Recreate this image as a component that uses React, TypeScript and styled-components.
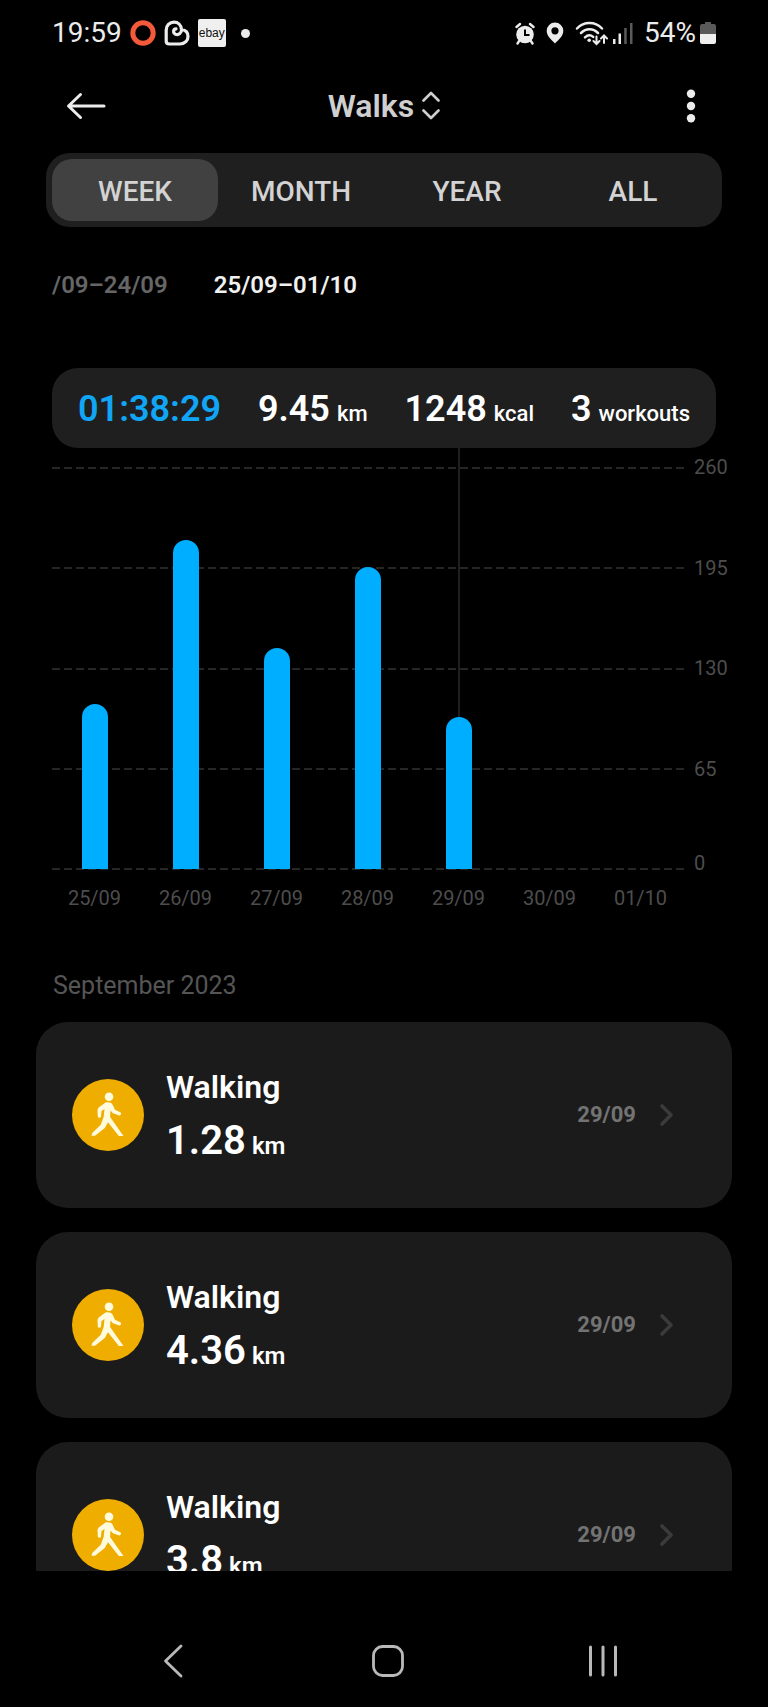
import React, { useState } from "react";
import styled, { createGlobalStyle } from "styled-components";

const GlobalStyle = createGlobalStyle`
  *, *::before, *::after { box-sizing: border-box; }
  body { margin: 0; background: #000; }
  button { border: 0; padding: 0; background: none; color: inherit; font: inherit; cursor: pointer; }
  a { color: inherit; text-decoration: none; }
  svg { display: block; flex: none; }
`;

const Screen = styled.div`
  display: flex;
  flex-direction: column;
  height: 100vh;
  overflow: hidden;
  background: #000;
  color: #fff;
  font-family: Roboto, "Liberation Sans", sans-serif;
`;

const StatusBar = styled.div`
  display: flex;
  flex: none;
  align-items: center;
  justify-content: space-between;
  height: 66px;
  padding: 0 52px;
  color: #ececec;
  font-size: 28px;
  line-height: 32px;
`;

const StatusGroup = styled.div<{ $gap: number }>`
  display: flex;
  align-items: center;
  gap: ${(p) => p.$gap}px;
`;

const EbayBadge = styled.span`
  display: flex;
  align-items: center;
  justify-content: center;
  width: 28px;
  height: 28px;
  border-radius: 2px;
  background: #efefef;
  color: #111;
  font: 12px/14px "Liberation Sans", sans-serif;
`;

const MoreDot = styled.span`
  width: 9px;
  height: 9px;
  margin-left: 7px;
  border-radius: 50%;
  background: #ececec;
`;

const Header = styled.header`
  display: grid;
  flex: none;
  grid-template-columns: 1fr auto 1fr;
  align-items: center;
  height: 80px;
  padding: 0 66px;
  color: #ececec;
`;

const EndButton = styled.button`
  justify-self: end;
  margin-right: 6px;
`;

const TitleButton = styled.button`
  display: flex;
  align-items: center;
  gap: 8px;
  color: #cfcfcf;
  font-size: 32px;
  font-weight: 600;
  line-height: 40px;
`;

const Tabs = styled.div`
  display: grid;
  flex: none;
  grid-template-columns: repeat(4, 1fr);
  height: 74px;
  margin: 7px 46px 0;
  padding: 6px;
  border-radius: 24px;
  background: #1f1f1f;
`;

const Tab = styled.button<{ $active: boolean }>`
  padding-top: 3px;
  border-radius: 20px;
  background: ${(p) => (p.$active ? "#414141" : "transparent")};
  color: #d3d3d3;
  font-size: 28px;
  font-weight: 500;
  line-height: 32px;
`;

const Ranges = styled.div`
  display: flex;
  flex: none;
  gap: 46px;
  margin: 42px 52px 0;
`;

const Range = styled.button<{ $active: boolean }>`
  color: ${(p) => (p.$active ? "#f0f0f0" : "#666")};
  font-size: 24px;
  font-weight: 600;
  line-height: 32px;
`;

const Summary = styled.section`
  display: flex;
  flex: none;
  align-items: center;
  justify-content: space-between;
  height: 80px;
  margin: 67px 52px 0;
  padding: 2px 26px 0;
  border-radius: 26px;
  background: #1f1f1f;
`;

const Stat = styled.div<{ $accent?: boolean }>`
  color: ${(p) => (p.$accent ? "#10a5f5" : "#fff")};
  font-size: 36px;
  font-weight: 600;
  line-height: 44px;
`;

const StatUnit = styled.span`
  margin-left: 7px;
  font-size: 22px;
  font-weight: 500;
  line-height: 24px;
`;

const Chart = styled.section`
  display: grid;
  flex: none;
  grid-template-columns: 1fr 74px;
  margin: 0 8px 0 49px;
  color: #4d4d4d;
  font-size: 20px;
  line-height: 24px;
`;

const Plot = styled.div`
  display: grid;
  grid-template-rows: 19px 402px;
`;

const GridLines = styled.div`
  display: flex;
  flex-direction: column;
  grid-area: 2 / 1;
  justify-content: space-between;
  margin: 0 2px -1px 3px;
`;

const GridLine = styled.div`
  height: 2px;
  background: repeating-linear-gradient(90deg, #262626 0 8px, transparent 8px 12px);
`;

const Columns = styled.div`
  display: grid;
  grid-area: 1 / 1 / 3 / 2;
  grid-template-columns: repeat(7, 1fr);
  z-index: 1;
`;

const Column = styled.div`
  display: flex;
  flex-direction: column;
  align-items: center;
`;

const Marker = styled.div<{ $visible: boolean }>`
  flex: 1;
  width: 2px;
  background: ${(p) => (p.$visible ? "#1f1f1f" : "transparent")};
`;

const Bar = styled.div`
  width: 26px;
  border-radius: 13px 13px 0 0;
  background: #00aeff;
`;

const YAxis = styled.div`
  display: flex;
  flex-direction: column;
  justify-content: space-between;
  height: 420px;
  margin-top: 7px;
  padding-left: 8px;

  /* keeps the zero above its base line */
  > :last-child { margin-top: -6px; }
`;

const XAxis = styled.div`
  display: grid;
  grid-template-columns: repeat(7, 1fr);
  margin-top: 11px;
  text-align: center;
`;

const MonthTitle = styled.h2`
  flex: none;
  margin: 60px 53px 20px;
  color: #555;
  font-size: 25px;
  font-weight: 400;
  line-height: 32px;
`;

const List = styled.main`
  display: flex;
  flex: 1;
  flex-direction: column;
  gap: 24px;
  min-height: 0;
  overflow: hidden;
  padding: 0 36px;
`;

const Card = styled.a`
  display: flex;
  flex: none;
  align-items: center;
  height: 186px;
  padding: 0 58px 0 36px;
  border-radius: 32px;
  background: #1b1b1b;
`;

const CardText = styled.div`
  flex: 1;
  margin-left: 22px;
  padding-top: 5px;
`;

const CardTitle = styled.div`
  font-size: 32px;
  font-weight: 600;
  line-height: 52px;
`;

const CardValue = styled.div`
  font-size: 40px;
  font-weight: 600;
  line-height: 56px;
`;

const CardUnit = styled.span`
  margin-left: 6px;
  font-size: 24px;
  font-weight: 600;
`;

const CardDate = styled.span`
  margin-right: 23px;
  color: #737373;
  font-size: 22px;
  font-weight: 700;
  line-height: 32px;
`;

const NavBar = styled.nav`
  display: grid;
  flex: none;
  grid-template-columns: repeat(3, 1fr);
  align-items: center;
  height: 136px;
  padding: 44px 58px 0 66px;
`;

const NavButton = styled.button`
  justify-self: center;
`;

const AlarmIcon = () => (
  <svg width="20" height="23" viewBox="0 0 20 23" fill="none" stroke="#ececec" aria-hidden="true">
    <circle cx="10" cy="12.5" r="8.8" fill="#ececec" stroke="none" />
    <path d="M1.5 5 5 2M18.500 5 15 2M4.500 18.500 2.500 21.500M15.500 18.500 17.500 21.500" strokeWidth="2.4" strokeLinecap="round" />
    <path d="M10 7.500V13h4.500" stroke="#000" strokeWidth="2" />
  </svg>
);

const PinIcon = () => (
  <svg width="18" height="22" viewBox="0 0 18 22" aria-hidden="true">
    <path fill="#ececec" fillRule="evenodd" d="M9 0.500a8.300 8.300 0 0 1 8.300 8.300C17.300 14 12.500 18 9 21.500 5.500 18 .7 14 .7 8.800A8.300 8.300 0 0 1 9 .5Zm0 4.700a3.600 3.600 0 1 0 0 7.200 3.600 3.600 0 0 0 0-7.200Z" />
  </svg>
);

const WifiIcon = () => (
  <svg width="33" height="25" viewBox="0 0 33 25" fill="none" stroke="#ececec" strokeLinecap="round" aria-hidden="true">
    <path d="M2 7.500C9 .3 20 .3 27 7.500M6 12c5-5 12-5 17 0M10 16.300c2.600-2.400 5.800-2.400 8.200-.4" strokeWidth="2.500" />
    <circle cx="14.200" cy="19.300" r="1.800" fill="#ececec" stroke="none" />
    <path d="M21.500 15.500v7.500m-3-3 3 3 3-3M29 22v-7.500m-3 3 3-3 3 3" strokeWidth="2" />
  </svg>
);

const SignalIcon = () => (
  <svg width="20" height="21" viewBox="0 0 20 21" aria-hidden="true">
    <path fill="#ececec" d="M0 16h2.500v5H0zM5.500 10.500H8V21H5.500z" />
    <path fill="#5a5a5a" d="M11.200 5h2.500v16h-2.500zM17 0h2.500v21H17z" />
  </svg>
);

const BatteryIcon = () => (
  <svg width="16" height="22" viewBox="0 0 16 22" aria-hidden="true">
    <path fill="#5a5a5a" d="M5 0h6v2h3q2 0 2 2v8H0V4q0-2 2-2h3z" />
    <path fill="#efefef" d="M0 12h16v8q0 2-2 2H2q-2 0-2-2z" />
  </svg>
);

const RingIcon = () => (
  <svg width="26" height="26" viewBox="0 0 26 26" aria-hidden="true">
    <circle cx="13" cy="13" r="10.200" fill="none" stroke="#f4593a" strokeWidth="5" />
  </svg>
);

const LoopHeartIcon = () => (
  <svg width="26" height="26" viewBox="0 0 26 26" fill="none" stroke="#ececec" strokeWidth="3.200" strokeLinecap="round" strokeLinejoin="round" aria-hidden="true">
    <path d="M12 8.800C9 9 8.800 13 11.500 14.200c3.200 1.200 6.300-1.200 6-4.700C17.200 5 14 2.200 10 2.200 5.500 2.200 2.200 5.500 2.200 10v11q0 3 3 3H16c5 0 8-3.500 8-7.600 0-4-2.500-6.400-6.500-6.900" />
  </svg>
);

const BackArrow = () => (
  <svg width="40" height="28" viewBox="0 0 40 28" fill="none" stroke="#ececec" strokeWidth="3" strokeLinecap="round" strokeLinejoin="round" aria-hidden="true">
    <path d="M38 14H3M14.500 2.500 2.500 14l12 11.500" />
  </svg>
);

const SortCarets = () => (
  <svg width="18" height="30" viewBox="0 0 18 30" fill="none" stroke="#cfcfcf" strokeWidth="2.600" strokeLinecap="round" strokeLinejoin="round" aria-hidden="true">
    <path d="m1.500 9.500 7.500-7.500 7.500 7.500M1.500 19.500 9 27l7.500-7.500" />
  </svg>
);

const KebabIcon = () => (
  <svg width="10" height="34" viewBox="0 0 10 34" fill="#ececec" aria-hidden="true">
    <circle cx="5" cy="4.700" r="4.200" />
    <circle cx="5" cy="17" r="4.200" />
    <circle cx="5" cy="29.300" r="4.200" />
  </svg>
);

const WalkerIcon = () => (
  <svg width="72" height="72" viewBox="0 0 72 72" aria-hidden="true">
    <circle cx="36" cy="36" r="36" fill="#efad00" />
    <g fill="#fffbdc">
      <circle cx="37" cy="17.800" r="4.300" />
      <path d="M33.500 23.500c3-.6 6 0 7 2l2.500 5.200 5.300 2.600c1.300.7.600 3.300-1 3.300l-6.400-2.300-2.400-2.800-.4 6.500L51.500 57h-4.700L36 43.200 32.800 49 23 56.700h-3.500L20.200 54l8.500-8.300 3-8 .8-7.700-3 2-.5 5.500c-.3 1.500-2.700 1.700-3.200 0l-.3-6.500c.2-1 .5-1.800 1.200-2.600z" />
    </g>
  </svg>
);

const ChevronIcon = () => (
  <svg width="15" height="24" viewBox="0 0 15 24" fill="none" stroke="#3b3b3b" strokeWidth="3.600" strokeLinecap="round" strokeLinejoin="round" aria-hidden="true">
    <path d="m3 3 9 9-9 9" />
  </svg>
);

const TABS = ["WEEK", "MONTH", "YEAR", "ALL"];

const STATS = [
  { value: "01:38:29", unit: "" },
  { value: "9.45", unit: "km" },
  { value: "1248", unit: "kcal" },
  { value: "3", unit: "workouts" },
];

const MAX_VALUE = 260;
const TICKS = [260, 195, 130, 65, 0];
const PLOT_HEIGHT = 402;

const DAYS = [
  { label: "25/09", value: 107 },
  { label: "26/09", value: 213 },
  { label: "27/09", value: 143 },
  { label: "28/09", value: 195 },
  { label: "29/09", value: 98 },
  { label: "30/09", value: 0 },
  { label: "01/10", value: 0 },
];
const SELECTED_DAY = "29/09";

const WORKOUTS = [
  { distance: "1.28", date: "29/09" },
  { distance: "4.36", date: "29/09" },
  { distance: "3.8", date: "29/09" },
];

export default function App() {
  const [tab, setTab] = useState("WEEK");

  return (
    <Screen>
      <GlobalStyle />
      <StatusBar>
        <StatusGroup $gap={8}>
          <span>19:59</span>
          <RingIcon />
          <LoopHeartIcon />
          <EbayBadge>ebay</EbayBadge>
          <MoreDot />
        </StatusGroup>
        <StatusGroup $gap={11}>
          <AlarmIcon />
          <PinIcon />
          <StatusGroup $gap={5}>
            <WifiIcon />
            <SignalIcon />
          </StatusGroup>
          <StatusGroup $gap={4}>
            <span>54%</span>
            <BatteryIcon />
          </StatusGroup>
        </StatusGroup>
      </StatusBar>

      <Header>
        <button aria-label="Back">
          <BackArrow />
        </button>
        <TitleButton aria-haspopup="listbox">
          Walks
          <SortCarets />
        </TitleButton>
        <EndButton aria-label="More options">
          <KebabIcon />
        </EndButton>
      </Header>

      <Tabs role="tablist">
        {TABS.map((name) => (
          <Tab key={name} role="tab" aria-selected={tab === name} $active={tab === name} onClick={() => setTab(name)}>
            {name}
          </Tab>
        ))}
      </Tabs>

      <Ranges>
        <Range $active={false}>/09–24/09</Range>
        <Range $active>25/09–01/10</Range>
      </Ranges>

      <Summary>
        {STATS.map((stat) => (
          <Stat key={stat.value} $accent={!stat.unit}>
            {stat.value}
            {stat.unit && <StatUnit>{stat.unit}</StatUnit>}
          </Stat>
        ))}
      </Summary>

      <Chart>
        <Plot>
          <GridLines>
            {TICKS.map((tick) => (
              <GridLine key={tick} />
            ))}
          </GridLines>
          <Columns>
            {DAYS.map((day) => (
              <Column key={day.label}>
                <Marker $visible={day.label === SELECTED_DAY} />
                <Bar style={{ height: Math.round((day.value / MAX_VALUE) * PLOT_HEIGHT) }} />
              </Column>
            ))}
          </Columns>
        </Plot>
        <YAxis>
          {TICKS.map((tick) => (
            <span key={tick}>{tick}</span>
          ))}
        </YAxis>
        <XAxis>
          {DAYS.map((day) => (
            <span key={day.label}>{day.label}</span>
          ))}
        </XAxis>
      </Chart>

      <MonthTitle>September 2023</MonthTitle>

      <List>
        {WORKOUTS.map((workout) => (
          <Card key={workout.distance} href="#workout">
            <WalkerIcon />
            <CardText>
              <CardTitle>Walking</CardTitle>
              <CardValue>
                {workout.distance}
                <CardUnit>km</CardUnit>
              </CardValue>
            </CardText>
            <CardDate>{workout.date}</CardDate>
            <ChevronIcon />
          </Card>
        ))}
      </List>

      <NavBar>
        <NavButton aria-label="Back">
          <svg width="20" height="34" viewBox="0 0 20 34" fill="none" stroke="#b9b9b9" strokeWidth="2.800" strokeLinecap="round" strokeLinejoin="round">
            <path d="M18 2 2.500 17 18 32" />
          </svg>
        </NavButton>
        <NavButton aria-label="Home">
          <svg width="32" height="32" viewBox="0 0 32 32" fill="none" stroke="#b9b9b9" strokeWidth="2.800">
            <rect x="1.500" y="1.500" width="29" height="29" rx="9" />
          </svg>
        </NavButton>
        <NavButton aria-label="Recent apps">
          <svg width="30" height="32" viewBox="0 0 30 32" fill="none" stroke="#b9b9b9" strokeWidth="3" strokeLinecap="round">
            <path d="M2.500 2v28M15 2v28M27.500 2v28" />
          </svg>
        </NavButton>
      </NavBar>
    </Screen>
  );
}
